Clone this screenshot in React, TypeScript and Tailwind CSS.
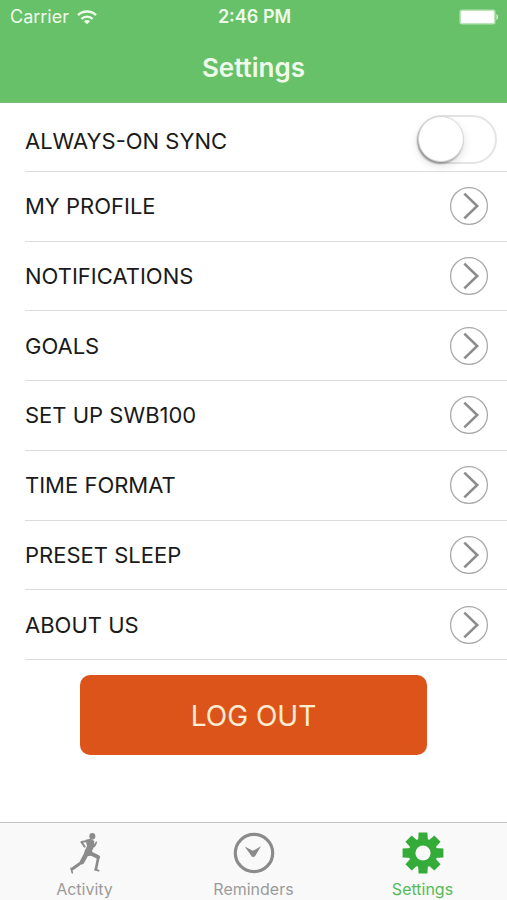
import { useState } from "react";
import type { ReactNode } from "react";

const items = [
  "MY PROFILE",
  "NOTIFICATIONS",
  "GOALS",
  "SET UP SWB100",
  "TIME FORMAT",
  "PRESET SLEEP",
  "ABOUT US",
];

function WifiIcon() {
  return (
    <svg viewBox="0 0 20 15" className="h-[15px] w-5" fill="none" stroke="currentColor" strokeWidth="2.4" aria-hidden="true">
      <path d="M1 5.2C6 0.3 14 0.3 19 5.2" />
      <path d="M4.4 8.9C7.6 5.9 12.4 5.9 15.6 8.9" />
      <path d="M10 14.2L6.9 11.3C8.6 9.7 11.4 9.7 13.1 11.3Z" fill="currentColor" stroke="none" />
    </svg>
  );
}

function BatteryIcon() {
  return (
    <svg viewBox="0 0 40 16" className="h-4 w-10" aria-hidden="true">
      <rect x="0.5" y="0.5" width="36" height="15" rx="2.5" fill="#b9e4b8" />
      <rect x="2" y="2" width="33" height="12" rx="1.5" fill="#fff" />
      <path d="M37.5 5C39.4 5.5 39.4 10.5 37.5 11Z" fill="#e3f5e2" />
    </svg>
  );
}

function ChevronCircle() {
  return (
    <svg viewBox="0 0 40 40" className="size-10" fill="none" aria-hidden="true">
      <circle cx="20" cy="20" r="18.4" stroke="#a9a9a9" strokeWidth="1.3" />
      <path d="M15.3 7.6L28.2 20L15.3 32.4" stroke="#8c8c8c" strokeWidth="2.6" />
    </svg>
  );
}

function RunnerIcon() {
  return (
    <svg viewBox="86 48 96 126" className="h-[42px] w-8 shrink-0" fill="none" stroke="currentColor" strokeLinejoin="round" strokeLinecap="round" aria-hidden="true">
      <ellipse cx="156" cy="61" rx="9" ry="10" fill="currentColor" stroke="none" />
      <path d="M136 71L150 68L162 75L161 92L155 105L158 115L146 121L131 116L133 104L140 91Z" fill="currentColor" stroke="none" />
      <path d="M145 74L123 78L133 92" strokeWidth="6" />
      <path d="M157 78L162 91L168 79" strokeWidth="5" />
      <path d="M147 110L173 123" strokeWidth="12" />
      <path d="M174 124L167 159" strokeWidth="8" />
      <path d="M164 161L175 164" strokeWidth="5" />
      <path d="M139 112L125 138" strokeWidth="14" />
      <path d="M124 139L97 158" strokeWidth="9" />
      <path d="M92 157L96 170" strokeWidth="5" />
    </svg>
  );
}

function ClockIcon() {
  return (
    <svg viewBox="0 0 42 42" className="size-[42px] shrink-0" aria-hidden="true">
      <circle cx="21" cy="21" r="18.7" fill="none" stroke="currentColor" strokeWidth="3.2" />
      <path d="M11.7 14.5L20 18.8L28 14.2L22.2 24Q20.5 26 18.8 24.4Z" fill="currentColor" />
    </svg>
  );
}

function GearIcon() {
  return (
    <svg viewBox="-21 -21 42 42" className="size-[42px] shrink-0" aria-hidden="true">
      <g fill="currentColor">
        {[0, 45, 90, 135].map((angle) => (
          <path key={angle} d="M-4.4 -20.4H4.4L5 -11V11L4.4 20.4H-4.4L-5 11V-11Z" transform={`rotate(${angle})`} />
        ))}
        <circle r="14.4" />
      </g>
      <circle r="7.6" fill="#f9f9f9" />
    </svg>
  );
}

function Tab({ label, active, children }: { label: string; active?: boolean; children: ReactNode }) {
  return (
    <a
      href={`#${label.toLowerCase()}`}
      aria-current={active ? "page" : undefined}
      className={`flex flex-1 flex-col items-center gap-1 pt-[9px] ${active ? "text-[#35ab3a]" : "text-[#8b8b8b]"}`}
    >
      {children}
      <span className={`text-base leading-[22px] ${active ? "text-[#55b958]" : "text-[#9b9b9b]"}`}>{label}</span>
    </a>
  );
}

export default function App() {
  const [sync, setSync] = useState(false);

  return (
    <div className="flex min-h-screen flex-col bg-white font-['Inter','Liberation_Sans',sans-serif]">
      <header className="h-[103px] border-b border-[#7dba7c] bg-[#67c168] text-[#effbea]">
        <div className="grid grid-cols-3 items-center pt-[5px] pr-2 pl-[10px]">
          <div className="flex items-center gap-2 text-lg leading-6">
            <span>Carrier</span>
            <WifiIcon />
          </div>
          <time className="text-center text-lg leading-6 font-semibold">2:46 PM</time>
          <div className="flex justify-end">
            <BatteryIcon />
          </div>
        </div>
        <h1 className="pt-[23px] text-center text-[26px] leading-8 font-semibold">Settings</h1>
      </header>

      <main className="flex flex-1 flex-col">
        <div className="ml-[25px] flex h-[69px] items-center justify-between border-b border-[#dcdcdc] pt-1 pr-[10px]">
          <label htmlFor="sync" className="pt-1 text-[22px] leading-7 text-[#1a1a1a]">
            ALWAYS-ON SYNC
          </label>
          <span className="relative h-[49px] w-20">
            <input
              id="sync"
              type="checkbox"
              role="switch"
              checked={sync}
              onChange={(event) => setSync(event.target.checked)}
              className="peer size-full cursor-pointer appearance-none rounded-full border-2 border-[#e4e4e4] bg-white checked:border-[#67c168] checked:bg-[#67c168]"
            />
            <span className="pointer-events-none absolute top-px left-px size-[46px] rounded-full border border-[#d6d6d6] bg-white shadow-[-1px_2px_2px_rgba(0,0,0,0.3),0_4px_10px_rgba(0,0,0,0.12)] peer-checked:left-8" />
          </span>
        </div>

        <ul className="grid flex-1 auto-rows-fr">
          {items.map((item) => (
            <li key={item} className="ml-[25px] flex border-b border-[#dcdcdc]">
              <button type="button" className="flex flex-1 items-center justify-between pr-[18px] text-left text-[22px] leading-7 text-[#1a1a1a]">
                {item}
                <ChevronCircle />
              </button>
            </li>
          ))}
        </ul>

        <div className="px-20 pt-[15px] pb-[67px]">
          <button type="button" className="h-20 w-full rounded-[10px] bg-[#dc541a] pt-px text-[28px] leading-9 text-[#ffecd2]">
            LOG OUT
          </button>
        </div>
      </main>

      <nav className="flex h-[78px] border-t border-[#c4c4c4] bg-[#f9f9f9]">
        <Tab label="Activity">
          <RunnerIcon />
        </Tab>
        <Tab label="Reminders">
          <ClockIcon />
        </Tab>
        <Tab label="Settings" active>
          <GearIcon />
        </Tab>
      </nav>
    </div>
  );
}
